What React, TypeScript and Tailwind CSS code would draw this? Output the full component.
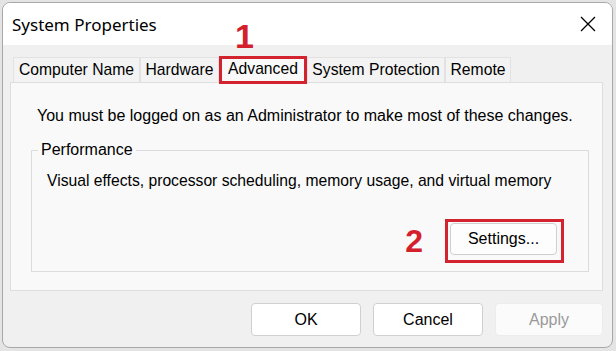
import React from "react"

const tabs = [
  { label: "Computer Name", w: "w-[127px]" },
  { label: "Hardware", w: "w-[79px]" },
  { label: "Advanced", w: "w-[88px]", active: true },
  { label: "System Protection", w: "w-[138px]" },
  { label: "Remote", w: "w-[66px]" },
]

function CloseIcon() {
  return (
    <svg width="16" height="16" viewBox="0 0 16 16" className="text-black">
      <path d="M1 1 L15 15 M15 1 L1 15" stroke="currentColor" strokeWidth="1.3" fill="none" />
    </svg>
  )
}

export default function App() {
  return (
    <div
      className="w-[616px] h-[351px] bg-[#e4e4e4] p-[2px] pr-[3px] pb-[3px] text-black"
      style={{ fontFamily: '"Liberation Sans", Arial, sans-serif' }}
    >
      <div className="relative flex h-full flex-col overflow-hidden rounded-[8px] border border-[#a8a8a8] bg-[#f0f0f0]">
        {/* title bar */}
        <div className="flex h-[42px] shrink-0 items-center justify-between bg-white pl-[9px] pr-[16px]">
          <span
            className="text-[17px] leading-none"
            style={{ fontFamily: '"Noto Sans", "Liberation Sans", sans-serif' }}
          >
            System Properties
          </span>
          <CloseIcon />
        </div>

        {/* step marker 1 */}
        <span className="absolute left-[232px] top-[16px] text-[34px] font-bold leading-none text-[#d4202c]">
          1
        </span>

        <div className="flex flex-1 flex-col pl-[7px] pr-[9px] pt-[11px]">
          {/* tabs */}
          <div className="flex h-[26px] items-end pl-[3px] text-[15.7px]">
            {tabs.map((t) =>
              t.active ? (
                <div
                  key={t.label}
                  className={`${t.w} relative z-10 -mb-[2px] flex h-[28px] items-start justify-center border-[3px] border-[#d2232e] bg-[#f9f9f9] pt-[1px] leading-[18px]`}
                >
                  {t.label}
                </div>
              ) : (
                <div
                  key={t.label}
                  className={`${t.w} flex h-[25px] items-center justify-center border border-b-0 border-[#e2e2e2] bg-[#f3f3f3] leading-none`}
                >
                  {t.label}
                </div>
              )
            )}
          </div>

          {/* panel */}
          <div className="flex h-[209px] flex-col border border-[#dedede] bg-[#f9f9f9] pl-[26px] pr-[13px] pt-[24px] text-[16px]">
            <p className="whitespace-nowrap leading-[18px]">
              You must be logged on as an Administrator to make most of these changes.
            </p>

            <fieldset className="mt-[16px] -ml-[6px] min-w-0 border border-[#dcdcdc] pb-[8px]">
              <legend className="ml-[6px] px-[3px] leading-[18px]">Performance</legend>
              <div className="pl-[15px] pr-[24px]">
                <p className="mt-[13px] whitespace-nowrap text-[15.7px] leading-[18px]">
                  Visual effects, processor scheduling, memory usage, and virtual memory
                </p>
                <div className="mt-[29px] flex items-center justify-end gap-[22px]">
                  <span className="text-[32px] font-bold leading-none text-[#d4202c]">2</span>
                  <div className="border-[3px] border-[#d2232e] pl-[2px] pr-[4px] pt-[1px] pb-[5px]">
                    <button className="flex h-[32px] w-[107px] items-center justify-center rounded-[4px] border border-[#cfcfcf] bg-[#fdfdfd]">
                      Settings...
                    </button>
                  </div>
                </div>
              </div>
            </fieldset>
          </div>

          {/* dialog buttons */}
          <div className="mt-[12px] flex justify-end gap-[12px] text-[16px]">
            <button className="flex h-[33px] w-[110px] items-center justify-center rounded-[4px] border border-[#d0d0d0] bg-white">
              OK
            </button>
            <button className="flex h-[33px] w-[110px] items-center justify-center rounded-[4px] border border-[#d0d0d0] bg-white">
              Cancel
            </button>
            <button className="flex h-[33px] w-[108px] items-center justify-center rounded-[4px] border border-[#ececec] bg-[#fbfbfb] text-[#9a9a9a]">
              Apply
            </button>
          </div>
        </div>
      </div>
    </div>
  )
}
